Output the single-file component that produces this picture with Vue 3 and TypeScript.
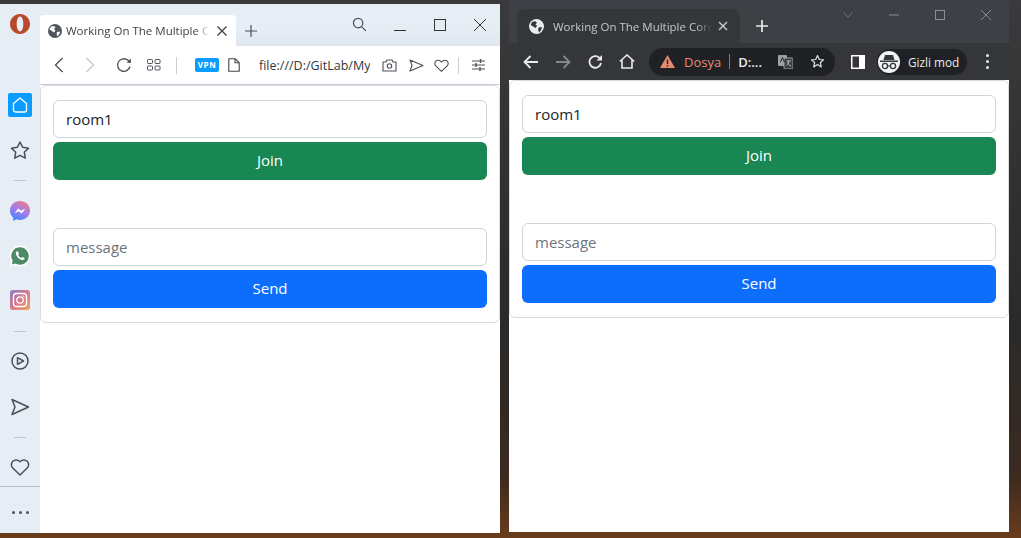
<script setup lang="ts">
import { ref } from 'vue'

const roomLeft = ref('room1')
const roomRight = ref('room1')
const tabTitle = 'Working On The Multiple Core Processors'
</script>

<template>
  <div class="desktop">
    <!-- opera window -->
    <section class="win opera">
      <aside class="side">
        <svg class="s-logo" width="24" height="24" viewBox="0 0 24 24">
          <path fill-rule="evenodd" fill="#b8492a" d="M12 2c5.500 0 10 4.500 10 10s-4.500 10-10 10S2 17.500 2 12 6.500 2 12 2zm0 2.600c-2 0-3.300 3.300-3.300 7.400s1.300 7.400 3.300 7.400 3.300-3.300 3.300-7.400-1.300-7.400-3.300-7.400z" />
        </svg>
        <div class="s-home">
          <svg width="18" height="18" viewBox="0 0 18 18" fill="none" stroke="#fff" stroke-width="1.300" stroke-linejoin="round">
            <path d="M2.500 7.400 9 2l6.500 5.400V14a2 2 0 0 1-2 2h-9a2 2 0 0 1-2-2z" />
          </svg>
        </div>
        <svg class="s-ico s-star" viewBox="0 0 24 24" fill="none" stroke="#4b5058" stroke-width="1.500" stroke-linejoin="round">
          <path d="m12 4 2.700 5.300 5.800.9-4.200 4.100 1 5.800-5.300-2.800-5.300 2.800 1-5.800-4.200-4.100 5.800-.9z" />
        </svg>
        <div class="s-div d1"></div>
        <svg class="s-ico s-mess" viewBox="0 0 24 24">
          <defs>
            <linearGradient id="mg" x1="0.7" y1="0" x2="0.2" y2="1">
              <stop offset="0" stop-color="#e8808c" />
              <stop offset="0.5" stop-color="#9c7cf0" />
              <stop offset="1" stop-color="#2f8cff" />
            </linearGradient>
          </defs>
          <path d="M12 2C6.300 2 2 6.100 2 11.500c0 2.900 1.200 5.300 3.200 7V22l3.100-1.700c1.200.4 2.400.6 3.700.6 5.700 0 10-4 10-9.400S17.700 2 12 2z" fill="url(#mg)" />
          <path d="m6.500 14.500 3.600-5 3 2.300 4.300-2.300-3.700 5-3-2.300z" fill="#fff" />
        </svg>
        <svg class="s-ico s-wa" viewBox="0 0 24 24">
          <path d="M12 2.500a9.500 9.500 0 0 0-8.100 14.400L2.700 21.500l4.700-1.200A9.500 9.500 0 1 0 12 2.500z" fill="#4f8a68" stroke="#fff" stroke-width="1.500" />
          <path d="M8.700 7.500c-.5.500-1 1.300-.8 2.500.4 2.200 3.300 5.400 6 5.900 1 .2 2-.3 2.500-1 .3-.4.200-.8-.1-1l-1.700-.9c-.3-.1-.5 0-.7.200l-.6.700c-1.300-.5-2.500-1.700-3.100-3l.6-.7c.2-.2.200-.4.100-.7l-.8-1.800c-.2-.4-.9-.5-1.400-.2z" fill="#fff" />
        </svg>
        <svg class="s-ico s-ig" viewBox="0 0 24 24">
          <defs>
            <linearGradient id="ig" x1="0" y1="0" x2="1" y2="1">
              <stop offset="0" stop-color="#8a7fc4" />
              <stop offset="0.5" stop-color="#d9788e" />
              <stop offset="1" stop-color="#eda35b" />
            </linearGradient>
          </defs>
          <rect x="2" y="2" width="20" height="20" rx="3" fill="url(#ig)" />
          <rect x="5.500" y="5.500" width="13" height="13" rx="3" fill="none" stroke="#fff" stroke-width="1.300" />
          <circle cx="12" cy="12" r="3.200" fill="none" stroke="#fff" stroke-width="1.300" />
          <circle cx="15.800" cy="8.200" r=".8" fill="#fff" />
        </svg>
        <div class="s-div d2"></div>
        <svg class="s-ico s-play" viewBox="0 0 24 24" fill="none" stroke="#4b5058" stroke-width="1.500" stroke-linejoin="round">
          <circle cx="12" cy="12" r="8" />
          <path d="m9.500 8.700 6 3.300-6 3.300z" />
        </svg>
        <svg class="s-ico s-send" viewBox="0 0 24 24" fill="none" stroke="#4b5058" stroke-width="1.500" stroke-linejoin="round">
          <path d="m4 4.500 16.500 7.500L4 19.500 7 12z" />
        </svg>
        <div class="s-div d3"></div>
        <svg class="s-ico s-heart" viewBox="0 0 24 24" fill="none" stroke="#4b5058" stroke-width="1.500" stroke-linejoin="round">
          <path d="M12 20 4.800 13a4.700 4.700 0 0 1 0-6.700 4.700 4.700 0 0 1 6.700 0l.5.500.5-.5a4.700 4.700 0 0 1 6.700 0 4.700 4.700 0 0 1 0 6.700z" />
        </svg>
        <div class="s-line"></div>
        <div class="s-dots"><i></i><i></i><i></i></div>
      </aside>

      <div class="op-main">
        <header class="op-strip">
          <div class="op-tab">
            <svg class="globe" width="14" height="14" viewBox="0 0 14 14">
              <circle cx="7" cy="7" r="7" fill="#50545c" />
              <path d="M3 2.500 6 2l1.500 1.500L6 5 7.500 6.500 6 8.500 4 7 1.500 5.500zM9 8l3-.5L11.500 10 9.500 12.500 8.500 10z" fill="#fff" />
            </svg>
            <span class="op-title">{{ tabTitle }}</span>
            <svg class="x" width="12" height="12" viewBox="0 0 12 12" stroke="#3c4046" stroke-width="1.300"><path d="m1.500 1.500 9 9m0-9-9 9" /></svg>
          </div>
          <svg class="op-plus" width="12" height="12" viewBox="0 0 12 12" stroke="#4b5058" stroke-width="1.200"><path d="M6 0v12M0 6h12" /></svg>
          <div class="op-ctrl">
            <svg class="op-search" width="15" height="15" viewBox="0 0 16 16" fill="none" stroke="#4b5058" stroke-width="1.300"><circle cx="6.500" cy="6.500" r="5" /><path d="m10.200 10.200 4.600 4.600" /></svg>
            <svg class="op-min" width="12" height="12" viewBox="0 0 12 12" stroke="#33373d" stroke-width="1"><path d="M0 11.500h12" /></svg>
            <svg class="op-max" width="12" height="12" viewBox="0 0 12 12" fill="none" stroke="#33373d" stroke-width="1"><rect x=".5" y=".5" width="11" height="11" /></svg>
            <svg class="op-close" width="12" height="12" viewBox="0 0 12 12" stroke="#33373d" stroke-width="1"><path d="m0 0 12 12m0-12L0 12" /></svg>
          </div>
        </header>

        <nav class="op-bar">
          <svg class="b-back" width="10" height="16" viewBox="0 0 10 16" fill="none" stroke="#4b5058" stroke-width="1.300"><path d="M8.500 1 1.500 8l7 7" /></svg>
          <svg class="b-fwd" width="10" height="16" viewBox="0 0 10 16" fill="none" stroke="#c3c7cc" stroke-width="1.300"><path d="m1.500 1 7 7-7 7" /></svg>
          <svg class="b-reload" width="16" height="16" viewBox="0 0 16 16" fill="none" stroke="#4b5058" stroke-width="1.300"><path d="M14 9.500A6.300 6.300 0 1 1 12 3.300L14.500 5.500" /><path d="M14.800 1.500v4.300h-4.300" fill="#4b5058" stroke="none" /></svg>
          <svg class="b-grid" width="14" height="12" viewBox="0 0 14 12" fill="none" stroke="#4b5058" stroke-width="1"><rect x=".5" y=".5" width="5" height="4" rx=".8" /><rect x="8" y=".5" width="5" height="4" rx=".8" /><rect x=".5" y="7" width="5" height="4" rx=".8" /><rect x="8" y="7" width="5" height="4" rx=".8" /></svg>
          <span class="b-sep sep1"></span>
          <span class="vpn">VPN</span>
          <svg class="b-doc" width="12" height="14" viewBox="0 0 12 14" fill="none" stroke="#3f434a" stroke-width="1.100" stroke-linejoin="round"><path d="M.8.8h6.500l3.900 3.900v8.500H.8zM7 .8v4h4.200" /></svg>
          <span class="url">file:///D:/GitLab/MyProject/index.html</span>
          <svg class="b-cam" width="15" height="13" viewBox="0 0 15 13" fill="none" stroke="#4b5058" stroke-width="1.100"><path d="M1 3h3l1-2h5l1 2h3v9H1z" stroke-linejoin="round" /><circle cx="7.500" cy="7" r="2.200" /></svg>
          <svg class="b-send" width="15" height="13" viewBox="0 0 15 13" fill="none" stroke="#4b5058" stroke-width="1.100" stroke-linejoin="round"><path d="m1 1 13 5.500L1 12l2-5.500z" /></svg>
          <svg class="b-heart" width="15" height="13" viewBox="0 0 15 13" fill="none" stroke="#4b5058" stroke-width="1.100" stroke-linejoin="round"><path d="M7.500 12.300 1.800 6.800a3.200 3.200 0 0 1 0-4.600 3.300 3.300 0 0 1 4.700 0l1 1 1-1a3.300 3.300 0 0 1 4.700 0 3.200 3.200 0 0 1 0 4.600z" /></svg>
          <span class="b-sep sep2"></span>
          <svg class="b-tune" width="13" height="12" viewBox="0 0 13 12" fill="none" stroke="#4b5058" stroke-width="1"><path d="M0 2h13M0 6h13M0 10h13" /><path d="M8.500 0v4M4 4v4M8 8v4" stroke-width="1.400" /></svg>
        </nav>

        <main class="op-page">
          <div class="card op-card">
            <input v-model="roomLeft" class="field" type="text">
            <button class="btn green" type="button">Join</button>
            <input class="field second" type="text" placeholder="message">
            <button class="btn blue" type="button">Send</button>
          </div>
        </main>
      </div>
    </section>

    <!-- chrome window -->
    <section class="win chrome">
      <header class="cr-strip">
        <div class="cr-tab">
          <svg class="globe" width="15" height="15" viewBox="0 0 14 14">
            <circle cx="7" cy="7" r="7" fill="#e8eaed" />
            <path d="M3 2.500 6 2l1.500 1.500L6 5 7.500 6.500 6 8.500 4 7 1.500 5.500zM9 8l3-.5L11.500 10 9.500 12.500 8.500 10z" fill="#35363a" />
          </svg>
          <span class="cr-title">{{ tabTitle }}</span>
          <svg class="x" width="10" height="10" viewBox="0 0 10 10" stroke="#c4c7cc" stroke-width="1.500"><path d="m1 1 8 8m0-8-8 8" /></svg>
        </div>
        <svg class="cr-plus" width="12" height="12" viewBox="0 0 12 12" stroke="#e8eaed" stroke-width="1.700"><path d="M6 0v12M0 6h12" /></svg>
        <div class="cr-ctrl">
          <svg class="c-chev" width="10" height="6" viewBox="0 0 10 6" fill="none" stroke="#70747a"><path d="m.5.5 4.500 4.500L9.500.5" /></svg>
          <svg class="c-min" width="10" height="10" viewBox="0 0 10 10" stroke="#8a8d92"><path d="M0 5h10" /></svg>
          <svg class="c-max" width="10" height="10" viewBox="0 0 10 10" fill="none" stroke="#8a8d92"><rect x=".5" y=".5" width="9" height="9" /></svg>
          <svg class="c-close" width="10" height="10" viewBox="0 0 10 10" stroke="#8a8d92"><path d="m0 0 10 10m0-10L0 10" /></svg>
        </div>
      </header>

      <nav class="cr-bar">
        <svg class="t-back" width="16" height="14" viewBox="0 0 16 14" fill="none" stroke="#e8eaed" stroke-width="1.800"><path d="M15 7H2M7.500 1 1.500 7l6 6" /></svg>
        <svg class="t-fwd" width="16" height="14" viewBox="0 0 16 14" fill="none" stroke="#85888d" stroke-width="1.800"><path d="M1 7h13M8.500 1l6 6-6 6" /></svg>
        <svg class="t-reload" width="15" height="15" viewBox="0 0 15 15" fill="none" stroke="#e8eaed" stroke-width="1.800"><path d="M13 9a5.800 5.800 0 1 1-1.700-5.300L13 5.300" /><path d="M14 1v5.500H8.500" fill="#e8eaed" stroke="none" /></svg>
        <svg class="t-home" width="16" height="15" viewBox="0 0 16 15" fill="none" stroke="#e8eaed" stroke-width="1.600"><path d="M.8 7.500 8 1l7.200 6.500M3 6v8h10V6" /></svg>
        <div class="omni">
          <svg width="15" height="13" viewBox="0 0 15 13"><path d="M7.500 0 15 13H0z" fill="#e58a73" /><path d="M6.800 4.500h1.400v4.500H6.800zM6.800 10h1.400v1.400H6.800z" fill="#202124" /></svg>
          <span class="dosya">Dosya</span>
          <span class="omni-sep"></span>
          <span class="omni-url">D:...</span>
          <svg class="translate" width="15" height="14" viewBox="0 0 15 14"><rect x="0" y="0" width="9" height="11" rx="1" fill="#9aa0a6" /><rect x="6" y="3" width="9" height="11" rx="1" fill="#3c4043" stroke="#9aa0a6" /><path d="M2.500 7 4.500 2.500 6.500 7" fill="none" stroke="#202124" /><path d="M8.500 6h4.500M11 5.500c0 2-1 4-2.500 5M9.500 7.500c.5 1.500 2 3 3.500 3.500" fill="none" stroke="#cfd1d4" stroke-width=".8" /></svg>
          <svg class="o-star" width="15" height="15" viewBox="0 0 15 15" fill="none" stroke="#dfe1e4" stroke-width="1.200" stroke-linejoin="round"><path d="m7.500 1.500 1.800 4 4.200.4-3.200 2.800 1 4.200-3.800-2.300-3.800 2.300 1-4.200L1.500 5.900l4.200-.4z" /></svg>
        </div>
        <svg class="t-panel" width="14" height="14" viewBox="0 0 14 14"><rect width="14" height="14" fill="#fff" /><rect x="1.500" y="1.500" width="6.500" height="11" fill="#35363a" /></svg>
        <div class="incog">
          <span class="avatar">
            <svg width="18" height="16" viewBox="0 0 18 16" fill="#35363a">
              <path d="M5 1h8l1.500 5h-11zM0 6.500h18V8H0z" />
              <circle cx="5" cy="12" r="2.600" fill="none" stroke="#35363a" stroke-width="1.300" />
              <circle cx="13" cy="12" r="2.600" fill="none" stroke="#35363a" stroke-width="1.300" />
              <path d="M7.500 11.500h3v1h-3z" />
            </svg>
          </span>
          <span class="incog-text">Gizli mod</span>
        </div>
        <div class="kebab"><i></i><i></i><i></i></div>
      </nav>

      <main class="cr-page">
        <div class="card cr-card">
          <input v-model="roomRight" class="field" type="text">
          <button class="btn green" type="button">Join</button>
          <input class="field second" type="text" placeholder="message">
          <button class="btn blue" type="button">Send</button>
        </div>
      </main>
    </section>
  </div>
</template>

<style>
html, body { margin: 0; }
</style>

<style scoped>
.desktop {
  position: relative;
  width: 1021px;
  height: 538px;
  overflow: hidden;
  font-family: "Open Sans", "Noto Sans", sans-serif;
  background: linear-gradient(#3a3a3c 0, #2a2a2a 60%, #3a2a20 88%, #6a3c1c 100%);
}
.win {
  position: absolute;
  top: 0;
  width: 500px;
  display: flex;
  overflow: hidden;
  background: #fff;
}
.opera { left: 0; top: 4px; height: 529px; }
.chrome { left: 509px; height: 532px; flex-direction: column; }

/* opera sidebar */
.side {
  width: 40px;
  flex: none;
  display: flex;
  flex-direction: column;
  align-items: center;
  padding-top: 8px;
  box-sizing: border-box;
  background: #e6edf5;
}
.s-home {
  margin-top: 57px;
  width: 24px;
  height: 24px;
  flex: none;
  display: flex;
  align-items: center;
  justify-content: center;
  border-radius: 2px;
  background: #0a9dff;
}
.s-ico { width: 24px; height: 24px; flex: none; }
.s-star { margin-top: 21px; }
.s-div { width: 12px; height: 1px; flex: none; background: #bcc3cb; }
.d1 { margin-top: 18px; }
.s-mess { margin-top: 18px; }
.s-wa { margin-top: 21px; }
.s-ig { margin-top: 20px; }
.d2 { margin-top: 19px; }
.s-play { margin-top: 17px; }
.s-send { margin-top: 22px; }
.d3 { margin-top: 18px; }
.s-heart { margin-top: 17px; }
.s-line { width: 100%; height: 1px; flex: none; margin-top: 7px; background: #b9c1ca; }
.s-dots { display: flex; gap: 4px; margin-top: 24px; }
.s-dots i { width: 3px; height: 3px; border-radius: 50%; background: #4b5058; }

/* opera top */
.op-main { flex: 1; min-width: 0; display: flex; flex-direction: column; }
.op-strip {
  height: 42px;
  flex: none;
  display: flex;
  align-items: flex-end;
  background: linear-gradient(#e6edf5 60%, #dfe6ee);
}
.op-tab {
  width: 196px;
  height: 31px;
  box-sizing: border-box;
  padding: 0 8px 0 8px;
  display: flex;
  align-items: center;
  border-radius: 4px 4px 0 0;
  background: #fff;
}
.op-title {
  flex: 1;
  min-width: 0;
  margin-left: 4px;
  font-size: 11.500px;
  white-space: nowrap;
  overflow: hidden;
  color: #3d4148;
  -webkit-mask-image: linear-gradient(to right, #000 90%, transparent);
  mask-image: linear-gradient(to right, #000 90%, transparent);
}
.x { flex: none; margin-left: 6px; }
.op-plus { margin: 0 0 9px 9px; }
.op-ctrl {
  margin-left: auto;
  align-self: stretch;
  display: flex;
  align-items: flex-start;
  padding: 13px 14px 0 0;
}
.op-min { margin: 2px 0 0 27px; }
.op-max { margin: 2px 0 0 28px; }
.op-close { margin: 2px 0 0 28px; }

.op-bar {
  height: 38px;
  flex: none;
  display: flex;
  align-items: center;
  box-sizing: border-box;
  padding-left: 14px;
  background: #fff;
}
.b-fwd { margin-left: 21px; }
.b-reload { margin-left: 21px; }
.b-grid { margin-left: 15px; }
.b-sep { width: 1px; height: 17px; flex: none; background: #c9ced4; }
.sep1 { margin-left: 15px; }
.vpn {
  margin-left: 18px;
  width: 24px;
  height: 14px;
  flex: none;
  border-radius: 2px;
  background: #0a9dff;
  color: #fff;
  font-size: 8px;
  font-weight: 700;
  letter-spacing: .6px;
  line-height: 14px;
  text-align: center;
}
.b-doc { margin-left: 9px; flex: none; }
.url {
  width: 111px;
  flex: none;
  margin-left: 19px;
  font-size: 12.500px;
  white-space: nowrap;
  overflow: hidden;
  color: #33373d;
}
.b-cam { margin-left: 12px; flex: none; }
.b-send { margin-left: 12px; flex: none; }
.b-heart { margin-left: 10px; flex: none; }
.sep2 { margin-left: 9px; }
.b-tune { margin-left: 13px; flex: none; }

.op-page { flex: 1; border-top: 1px solid #c5ced8; }
.op-card { height: 238px; border-top-left-radius: 6px; border-top-right-radius: 6px; }

/* chrome top */
.cr-strip {
  height: 43px;
  flex: none;
  display: flex;
  align-items: flex-end;
  padding-left: 8px;
  background: #3e4045;
}
.cr-tab {
  width: 223px;
  height: 34px;
  box-sizing: border-box;
  padding: 0 12px;
  display: flex;
  align-items: center;
  border-radius: 8px 8px 0 0;
  background: #35363a;
}
.cr-title {
  flex: 1;
  min-width: 0;
  margin-left: 9px;
  font-size: 11.500px;
  white-space: nowrap;
  overflow: hidden;
  color: #c5c8cc;
  -webkit-mask-image: linear-gradient(to right, #000 90%, transparent);
  mask-image: linear-gradient(to right, #000 90%, transparent);
}
.cr-plus { margin: 0 0 11px 16px; }
.cr-ctrl {
  margin-left: auto;
  align-self: stretch;
  display: flex;
  align-items: flex-start;
  padding: 10px 18px 0 0;
}
.c-chev { margin-top: 2px; }
.c-min { margin-left: 36px; }
.c-max { margin-left: 36px; }
.c-close { margin-left: 36px; }

.cr-bar {
  height: 37px;
  flex: none;
  display: flex;
  align-items: center;
  padding-left: 14px;
  box-sizing: border-box;
  background: #35363a;
}
.t-fwd { margin-left: 16px; flex: none; }
.t-reload { margin-left: 17px; flex: none; }
.t-home { margin-left: 16px; flex: none; }
.omni {
  margin-left: 14px;
  width: 186px;
  height: 28px;
  flex: none;
  box-sizing: border-box;
  padding-left: 11px;
  display: flex;
  align-items: center;
  border-radius: 14px;
  background: #202124;
}
.dosya { margin-left: 9px; font-size: 13px; color: #e58a73; }
.omni-sep { width: 1px; height: 15px; margin-left: 8px; background: #7a7c80; }
.omni-url { margin-left: 8px; font-size: 13px; font-weight: 600; color: #e8eaed; }
.translate { margin-left: 16px; flex: none; }
.o-star { margin-left: 17px; flex: none; }
.t-panel { margin-left: 16px; flex: none; }
.incog {
  margin-left: 12px;
  width: 90px;
  height: 26px;
  flex: none;
  display: flex;
  align-items: center;
  box-sizing: border-box;
  border-radius: 13px;
  background: #202124;
}
.avatar {
  width: 22px;
  height: 22px;
  margin-left: 1px;
  flex: none;
  display: flex;
  align-items: center;
  justify-content: center;
  border-radius: 50%;
  background: #f1f3f4;
}
.incog-text { margin-left: 8px; font-size: 11.800px; color: #e8eaed; white-space: nowrap; }
.kebab { margin-left: 19px; display: flex; flex-direction: column; gap: 3px; }
.kebab i { width: 3px; height: 3px; border-radius: 50%; background: #e8eaed; }

.cr-page { flex: 1; background: #fff; }
.cr-card { height: 238px; border-radius: 6px; }

/* the form, same in both windows */
.card {
  display: flex;
  flex-direction: column;
  box-sizing: border-box;
  padding: 14px 12px;
  border: 1px solid #d8dbdf;
  border-radius: 6px;
  background: #fff;
}
.field {
  height: 38px;
  flex: none;
  box-sizing: border-box;
  padding: 0 12px;
  border: 1px solid #ced4da;
  border-radius: 6px;
  outline: none;
  font: inherit;
  font-size: 15px;
  color: #212529;
  background: #fff;
}
.field::placeholder { color: #6c757d; opacity: 1; }
.second { margin-top: 48px; }
.btn {
  height: 38px;
  flex: none;
  margin-top: 4px;
  padding: 0 0 2px;
  border: 0;
  border-radius: 6px;
  font: inherit;
  font-size: 15px;
  color: #fff;
}
.green { background: #198754; }
.blue { background: #0d6efd; }
</style>
